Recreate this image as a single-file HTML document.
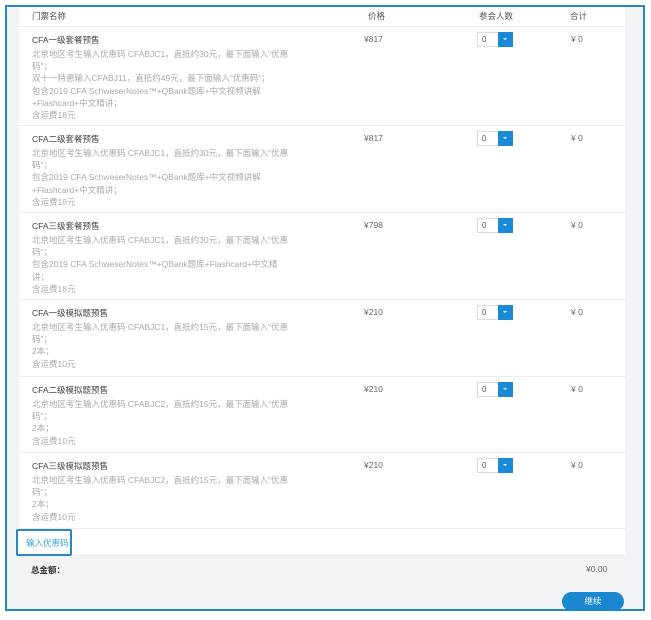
<!DOCTYPE html><html><head><meta charset="utf-8"><style>
body{margin:0;width:651px;height:620px;background:#fff;font-family:"Liberation Sans","Noto Sans CJK SC",sans-serif;position:relative;overflow:hidden}
.frame{position:absolute;left:5px;top:5px;width:636px;height:602px;border:2px solid #2a86c8;background:#f2f3f5}
.tbl{position:absolute;left:19px;top:7px;width:606px;height:546px;background:#fff}
.row{position:absolute;left:19px;width:606px;border-top:1px solid #ececec;background:#fff}
.t{position:absolute;left:13px;top:7px;font-size:8.5px;color:#444}
.d{position:absolute;left:13px;top:21px;width:262px;font-size:8.5px;line-height:12.2px;color:#aaa}
.p{position:absolute;left:345px;top:7px;font-size:8.5px;color:#666}
.s{position:absolute;left:458px;top:5px;width:36px;height:15px;border:1px solid #ddd;font-size:8px;color:#555;box-sizing:border-box}
.s span{position:absolute;left:4px;top:2px}
.s b{position:absolute;right:-1px;top:-1px;width:15px;height:15px;background:#1a8ad6}
.s b:after{content:"";position:absolute;left:5px;top:6px;border:2.5px solid transparent;border-top:2.5px solid #fff}
.a{position:absolute;left:552px;top:7px;font-size:8.5px;color:#666}
.h{position:absolute;top:10px;font-size:8.5px;color:#555}
</style></head><body>
<div class="frame"></div>
<div class="tbl"></div>
<div class="h" style="left:32px">门票名称</div>
<div class="h" style="left:368px">价格</div>
<div class="h" style="left:479px">参会人数</div>
<div class="h" style="left:570px">合计</div>

<div class="row" style="top:26px;height:99px"><div class="t">CFA一级套餐预售</div><div class="d">北京地区考生输入优惠码 CFABJC1，直抵约30元，最下面输入"优惠码"；<br>双十一特惠输入CFABJ11，直抵约49元，最下面输入"优惠码"；<br>包含2019 CFA SchweserNotes™+QBank题库+中文视频讲解+Flashcard+中文精讲；<br>含运费18元</div><div class="p">¥817</div><div class="s"><span>0</span><b></b></div><div class="a">¥ 0</div></div>

<div class="row" style="top:125px;height:87px"><div class="t">CFA二级套餐预售</div><div class="d">北京地区考生输入优惠码 CFABJC1，直抵约30元，最下面输入"优惠码"；<br>包含2019 CFA SchweserNotes™+QBank题库+中文视频讲解+Flashcard+中文精讲；<br>含运费18元</div><div class="p">¥817</div><div class="s"><span>0</span><b></b></div><div class="a">¥ 0</div></div>

<div class="row" style="top:212px;height:87px"><div class="t">CFA三级套餐预售</div><div class="d">北京地区考生输入优惠码 CFABJC1，直抵约30元，最下面输入"优惠码"；<br>包含2019 CFA SchweserNotes™+QBank题库+Flashcard+中文精讲；<br>含运费18元</div><div class="p">¥798</div><div class="s"><span>0</span><b></b></div><div class="a">¥ 0</div></div>

<div class="row" style="top:299px;height:77px"><div class="t">CFA一级模拟题预售</div><div class="d">北京地区考生输入优惠码 CFABJC1，直抵约15元，最下面输入"优惠码"；<br>2本；<br>含运费10元</div><div class="p">¥210</div><div class="s"><span>0</span><b></b></div><div class="a">¥ 0</div></div>

<div class="row" style="top:376px;height:76px"><div class="t">CFA二级模拟题预售</div><div class="d">北京地区考生输入优惠码 CFABJC2，直抵约15元，最下面输入"优惠码"；<br>2本；<br>含运费10元</div><div class="p">¥210</div><div class="s"><span>0</span><b></b></div><div class="a">¥ 0</div></div>

<div class="row" style="top:452px;height:76px"><div class="t">CFA三级模拟题预售</div><div class="d">北京地区考生输入优惠码 CFABJC2，直抵约15元，最下面输入"优惠码"；<br>2本；<br>含运费10元</div><div class="p">¥210</div><div class="s"><span>0</span><b></b></div><div class="a">¥ 0</div></div>

<div class="row" style="top:528px;height:25px"></div>
<div style="position:absolute;left:16px;top:529px;width:56px;height:27px;border:2px solid #2a86c8;border-radius:2px;box-sizing:border-box;background:#fff;font-size:8.5px;color:#3aa3d8;padding:6px 0 0 8px;white-space:nowrap">输入优惠码</div>
<div style="position:absolute;left:31px;top:564px;font-size:8.5px;color:#333;font-weight:bold">总金额：</div>
<div style="position:absolute;left:586px;top:564px;font-size:8.5px;color:#666">¥0.00</div>
<div style="position:absolute;left:562px;top:592px;width:62px;height:19px;border-radius:10px;background:#1a87d0;color:#fff;font-size:8.5px;text-align:center;line-height:19px">继续</div>
</body></html>
